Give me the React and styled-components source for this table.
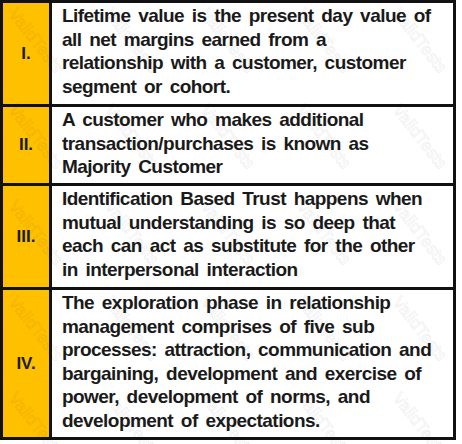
import React from 'react';
import styled, { createGlobalStyle } from 'styled-components';

const GlobalStyle = createGlobalStyle`
	body {
		margin: 0;
		background: #ffffff;
	}
`;

const Page = styled.div`
	position: relative;
	width: 462px;
	height: 444px;
	overflow: hidden;
`;

const Table = styled.div`
	display: grid;
	grid-template-columns: 46px 401px;
	grid-template-rows: 101px 76px 101px 147px;
	gap: 3px;
	padding: 3px;
	width: 456px;
	box-sizing: border-box;
	background: #111111;
	font-family: "Liberation Sans", Arial, sans-serif;
	font-weight: bold;
	color: #1a1a1a;
`;

const Numeral = styled.div`
	background: #ffc000;
	display: flex;
	align-items: center;
	justify-content: center;
	font-size: 17px;
`;

const Statement = styled.div`
	background: #ffffff;
	padding: 1px 4px 0 10px;
	font-size: 19px;
	line-height: 23.5px;
	letter-spacing: -0.55px;
	word-spacing: 3px;
	overflow: hidden;
`;

const Line = styled.div`
	white-space: nowrap;
`;

const Watermark = styled.svg`
	position: absolute;
	inset: 0;
	pointer-events: none;
`;

const rows = [
	['I.', [
		'Lifetime value is the present day value of',
		'all net margins earned from a',
		'relationship with a customer, customer',
		'segment or cohort.',
	]],
	['II.', [
		'A customer who makes additional',
		'transaction/purchases is known as',
		'Majority Customer',
	]],
	['III.', [
		'Identification Based Trust happens when',
		'mutual understanding is so deep that',
		'each can act as substitute for the other',
		'in interpersonal interaction',
	]],
	['IV.', [
		'The exploration phase in relationship',
		'management comprises of five sub',
		'processes: attraction, communication and',
		'bargaining, development and exercise of',
		'power, development of norms, and',
		'development of expectations.',
	]],
];

const App = () => {
	return (
		<>
			<GlobalStyle />
			<Page>
				<Table>
					{rows.map(([num, lines]) => (
						<React.Fragment key={num}>
							<Numeral>{num}</Numeral>
							<Statement>
								{lines.map((line) => (
									<Line key={line}>{line}</Line>
								))}
							</Statement>
						</React.Fragment>
					))}
				</Table>
				<Watermark width="462" height="444">
					<defs>
						<pattern id="wm" width="96" height="96" patternUnits="userSpaceOnUse">
							<text
								x="8"
								y="14"
								transform="rotate(52 8 14)"
								fontFamily="Liberation Sans, Arial, sans-serif"
								fontSize="17"
								fill="none"
								stroke="#000"
								strokeWidth="0.5"
								opacity="0.09"
							>
								ValidTests
							</text>
						</pattern>
					</defs>
					<rect width="462" height="444" fill="url(#wm)" />
				</Watermark>
			</Page>
		</>
	);
};

export default App;
